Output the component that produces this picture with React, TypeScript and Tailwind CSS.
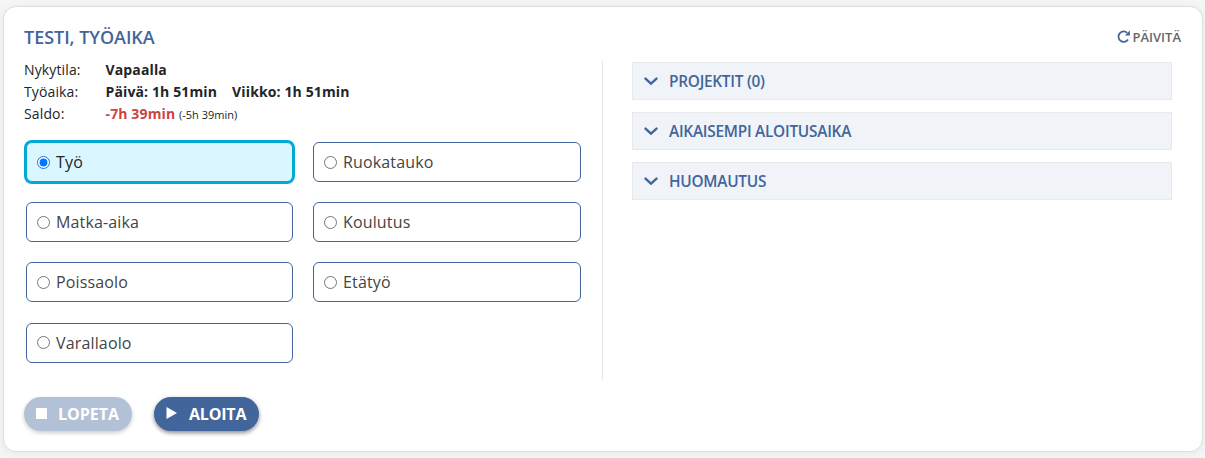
import { useState } from "react";

const options = ["Työ", "Ruokatauko", "Matka-aika", "Koulutus", "Poissaolo", "Etätyö", "Varallaolo"];
const sections = ["PROJEKTIT (0)", "AIKAISEMPI ALOITUSAIKA", "HUOMAUTUS"];

export default function App() {
  const [selected, setSelected] = useState("Työ");
  return (
    <div className="h-[458px] overflow-hidden bg-[#f5f5f5] pt-[6px] pr-[2px] pl-[3px] font-['Open_Sans',sans-serif]">
      <main className="h-[446px] rounded-[13px] border border-[#dedede] bg-white px-5 pt-[18px] shadow-[0_1px_8px_rgba(0,0,0,0.06)]">
        <header className="flex h-[36px] items-start justify-between">
          <h1 className="text-[18px] leading-[25px] font-semibold tracking-[-0.03px] text-[#42659b]">TESTI, TYÖAIKA</h1>
          <button className="flex h-[26px] items-center gap-[2px] text-[13px] font-semibold text-[#666]">
            <svg viewBox="0 0 13 13" className="mb-[4px] size-[13px] text-[#42659b]">
              <path d="M11 9.6A5.2 5.2 0 1 1 10.2 2.8" fill="none" stroke="currentColor" strokeWidth="1.8" />
              <path d="M12.9 0.4V5.4H7.9Z" fill="currentColor" />
            </svg>
            <span className="pr-px">PÄIVITÄ</span>
          </button>
        </header>

        <div className="flex">
          <section className="h-[319px] w-[579px] border-r border-[#e6e6e6]">
            <dl className="-mt-[2px] grid grid-cols-[81.5px_1fr] text-[14px] leading-[22px] tracking-[0.13px] text-[#212529]">
              <dt>Nykytila:</dt>
              <dd className="font-bold">Vapaalla</dd>
              <dt>Työaika:</dt>
              <dd className="flex gap-[15px] font-bold">
                <span>Päivä: 1h 51min</span>
                <span>Viikko: 1h 51min</span>
              </dd>
              <dt>Saldo:</dt>
              <dd>
                <span className="font-bold text-[#cc4444]">-7h 39min</span>{" "}
                <span className="text-[11px] tracking-normal">(-5h 39min)</span>
              </dd>
            </dl>
            <div className="ml-[2px] grid w-[555px] grid-cols-[267px_268px] gap-x-5 gap-y-[20.2px] pt-4">
              {options.map((name) => (
                <label
                  key={name}
                  className={`flex h-10 items-center rounded-[6px] border pl-[10px] text-[16px] leading-6 tracking-[0.15px] ${
                    selected === name
                      ? "border-[#00a9d6] bg-[#daf6fe] text-[#212529] ring-2 ring-[#00a9d6]"
                      : "border-[#42659b] bg-white text-[#444]"
                  }`}
                >
                  <input
                    type="radio"
                    name="work"
                    className="mr-[6px] size-[13px]"
                    checked={selected === name}
                    onChange={() => setSelected(name)}
                  />
                  {name}
                </label>
              ))}
            </div>
          </section>

          <section className="flex flex-1 flex-col gap-3 pt-px pr-[10px] pl-[29px]">
            {sections.map((name) => (
              <button
                key={name}
                className="flex h-[38px] w-full items-center border border-[#e9e9e9] bg-[#f0f3f8] pl-[11px] text-[15.4px] font-semibold tracking-[-0.26px] text-[#42659b]"
              >
                <svg viewBox="0 0 14 14" className="mr-[11px] size-[14px]">
                  <path d="m1.5 4.6 5.5 5 5.5-5" fill="none" stroke="currentColor" strokeWidth="2.4" strokeLinecap="round" />
                </svg>
                <span className="pt-[2px]">{name}</span>
              </button>
            ))}
          </section>
        </div>

        <footer className="mt-[17px] flex gap-[22px] text-[16px] font-bold text-white">
          <button className="flex h-[34px] w-[108px] items-center rounded-full bg-[#b3c1d7] pl-[12px] shadow-[0_2px_4px_rgba(0,0,0,0.2)]">
            <span className="mr-[11px] mb-[2px] size-[11px] bg-white" />
            LOPETA
          </button>
          <button className="flex h-[34px] w-[105px] items-center rounded-full bg-[#42659b] pl-[12px] tracking-[-0.2px] shadow-[0_2px_4px_rgba(0,0,0,0.45)]">
            <svg viewBox="0 0 11 12" className="mr-[12px] mb-[2px] h-[12px] w-[11px]">
              <path d="M0.5 0 11 6 0.5 12Z" fill="currentColor" />
            </svg>
            ALOITA
          </button>
        </footer>
      </main>
    </div>
  );
}
